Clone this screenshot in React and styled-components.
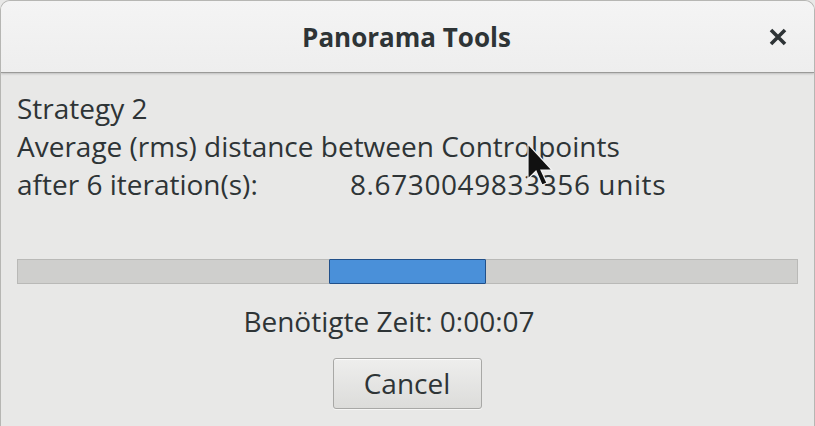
import styled, { createGlobalStyle } from 'styled-components'

const Global = createGlobalStyle`
  html, body {
    margin:0;
    padding:0;
    background:#e8e8e7;
  }
  * { box-sizing:border-box; }
`

const Window = styled.div`
  width:815px;
  height:426px;
  background:#e8e8e7;
  border:1px solid #b6b6b3;
  border-bottom:none;
  border-radius:10px 10px 0 0;
  overflow:hidden;
  position:relative;
  font-family:"Open Sans","Noto Sans",sans-serif;
  color:#2e3436;
  display:flex;
  flex-direction:column;
`

const TitleBar = styled.div`
  height:72px;
  flex:none;
  background:linear-gradient(#f4f4f4,#eeeeee);
  border-bottom:1px solid #9a9a98;
  box-shadow:0 1px 2px rgba(0,0,0,0.18);
  display:grid;
  grid-template-columns:1fr auto 1fr;
  align-items:center;
`

const Title = styled.div`
  grid-column:2;
  font-size:26px;
  font-weight:700;
  padding-right:2px;
`

const CloseBtn = styled.div`
  grid-column:3;
  justify-self:end;
  margin-right:27px;
  display:flex;
  align-items:center;
`

const Body = styled.div`
  padding:16px 17px 0 16px;
  display:flex;
  flex-direction:column;
`

const Line = styled.div`
  font-size:28px;
  line-height:38px;
  white-space:nowrap;
`

const ValueRow = styled(Line)`
  display:grid;
  grid-template-columns:333px auto;
`

const Value = styled.span`
  letter-spacing:0.6px;
`

const Track = styled.div`
  margin-top:56px;
  height:25px;
  width:781px;
  background:#cfcfcd;
  border:1px solid #b9b9b7;
  position:relative;
`

const Fill = styled.div`
  position:absolute;
  top:-1px;
  bottom:-1px;
  background:#4a90d9;
  border:1px solid #21508a;
  border-radius:1px;
`

const Elapsed = styled.div`
  margin-top:18px;
  font-size:28px;
  line-height:38px;
  text-align:center;
  padding-right:36px;
  white-space:nowrap;
`

const ButtonRow = styled.div`
  display:flex;
  justify-content:center;
  margin-top:18px;
`

const Button = styled.div`
  width:149px;
  height:51px;
  border:1px solid #a8a8a6;
  border-radius:3px;
  background:linear-gradient(#eeeeed,#dcdcda);
  box-shadow:inset 0 1px 0 #fafafa, 0 1px 0 rgba(255,255,255,0.6);
  display:flex;
  align-items:center;
  justify-content:center;
  font-size:28px;
  padding-bottom:2px;
`

const Cursor = styled.svg`
  position:absolute;
  left:526px;
  top:142px;
`

export default function App() {
  return (
    <>
      <Global />
      <Window>
        <TitleBar>
          <Title>Panorama Tools</Title>
          <CloseBtn>
            <svg width="18" height="18" viewBox="0 0 18 18">
              <path d="M2 2 L16 16 M16 2 L2 16" stroke="#2e3436" strokeWidth="3.6" strokeLinecap="butt" />
            </svg>
          </CloseBtn>
        </TitleBar>
        <Body>
          <Line>Strategy 2</Line>
          <Line>Average (rms) distance between Controlpoints</Line>
          <ValueRow>
            <span>after 6 iteration(s):</span>
            <Value>8.6730049833356 units</Value>
          </ValueRow>
          <Track>
            <Fill style={{ left: '311px', width: '157px' }} />
          </Track>
          <Elapsed>Benötigte Zeit: 0:00:07</Elapsed>
          <ButtonRow>
            <Button>Cancel</Button>
          </ButtonRow>
        </Body>
        <Cursor width="28" height="50" viewBox="0 0 28 50">
          <path d="M1 1 L1 36 L9 28 L15 42 L20 40 L14 27 L25 27 Z" fill="#111" stroke="#f2f2f2" strokeWidth="1.2" />
        </Cursor>
      </Window>
    </>
  )
}
